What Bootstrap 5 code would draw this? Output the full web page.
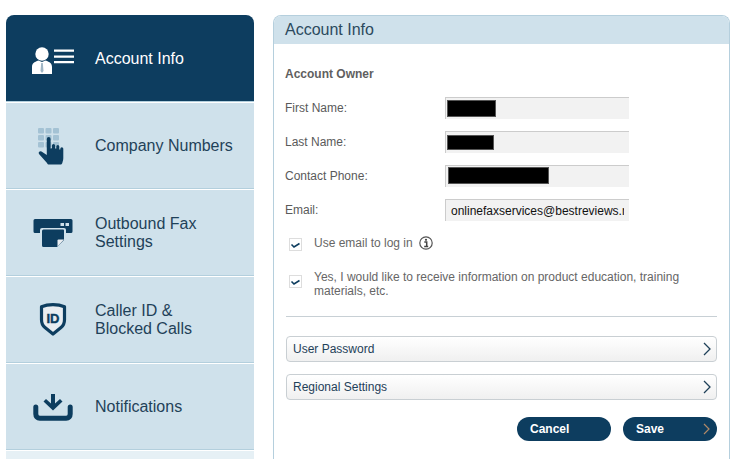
<!DOCTYPE html>
<html lang="en"><head><meta charset="utf-8">
<link href="https://cdn.jsdelivr.net/npm/bootstrap@5.3.0/dist/css/bootstrap.min.css" rel="stylesheet">
<style>
html,body{height:459px;overflow:hidden}
body{background:#fff;font-family:"Liberation Sans",Arial,sans-serif;color:#5a5a5a}
.shell{padding:15px 5px 0 6px;gap:19px;height:459px;overflow:hidden}
.side{width:248px;flex:none}
.side-item{background:#cfe1eb;color:#1f4159;font-size:16px;line-height:18px;border-top:1px solid #fff;border-bottom:1px solid #b3cfdd;box-sizing:content-box;height:85px}
.side-item.on{background:#0d3d5f;color:#fff;border-radius:8px 8px 0 0;border:0;border-bottom:1px solid #b3cfdd;padding-top:1px;box-sizing:border-box;height:87px}
.side-rest{height:20px;background:#e6f0f5;border-top:1px solid #fff}
.ic{width:89px;flex:none;padding-left:5px}
.ic-a{margin-top:4px}
.ic-b{margin-top:3px}
.ic-c{margin-top:2px}
.ic-e{margin-top:2px}
.panel{flex:1;border:1px solid #b5cfdd;border-bottom:0;border-radius:8px 8px 0 0;height:460px}
.panel-head{background:#cfe1eb;color:#2c4a5e;font-size:16px;line-height:27px;height:28px;padding:0 11px;border-radius:7px 7px 0 0}
.panel-body{padding:23px 12px 0}
.owner{font-size:12px;font-weight:700;line-height:14px;margin:0 0 16px -1px;color:#5f5f5f}
.frow{font-size:12px;height:34px}
.flabel{width:159px;flex:none;line-height:22px;margin-left:-1px}
.fbox{width:184px;height:22px;background:#f2f2f2;border-top:1px solid #ccc;border-left:1px solid #ccc;padding-left:1px;margin-left:1px;white-space:nowrap;color:#111;line-height:23px}
.fbox-mail{padding:0 5px}
.clip{display:block;overflow:hidden}
.ink{display:block;background:#000;border:1px solid #555}
.ink-1{width:49px;height:17px}
.ink-2{width:47px;height:15px}
.ink-3{width:101px;height:17px;margin:0 0 2px 1px}
.chk{width:13px;height:13px;border:1px solid #ddd;background:#fff;flex:none;margin-right:12px}
.optline{font-size:12px;line-height:14px;color:#666;margin-left:3px}
.opt-1{height:20px}
.opt-1 .chk{margin-top:3px}
.opt-2{margin-top:17px}
.opt-2 .chk{margin-top:5px}
.info{margin-left:6px;margin-top:-1px}
.hr{border-top:1px solid #c8d0d5;margin:18px 0 19px}
.acc{height:26px;border:1px solid #c9cfd3;border-radius:4px;background:linear-gradient(#fff,#f0f0f0);font-size:12px;color:#1f4159;padding:0 5px 0 6px;margin-bottom:12px}
.acts{margin-top:17px;column-gap:12px}
.pill{width:94px;height:24px;border-radius:12px;background:#0d3d5f;color:#fff;font-size:12px;font-weight:700;padding:0 7px 0 13px}
</style></head><body>
<div class="shell d-flex">
<nav class="side">
<div class="side-item on d-flex align-items-center"><div class="ic ic-a d-flex justify-content-center"><svg width="42" height="28" viewBox="0 0 42 28"><circle cx="10" cy="7" r="6.700" fill="#fff"/><path d="M0 27V20c0-3.500 2-5 6.500-6.500L10 15l3.500-1.500C18 15 20 16.500 20 20v7z" fill="#fff"/><path d="M9.200 16h1.600l.7 8-1.500 2-1.500-2z" fill="#9fb5c4"/><path d="M22 2.500h20v2.300H22zM22 8.500h20v2.300H22zM22 14h20v2.300H22z" fill="#fff"/></svg></div><span>Account Info</span></div>
<div class="side-item d-flex align-items-center"><div class="ic ic-b d-flex justify-content-center"><svg width="30" height="38" viewBox="0 0 30 38"><g fill="#a4c2d4"><rect width="6" height="5.500" rx="1"/><rect x="7.500" width="6" height="5.500" rx="1"/><rect x="15" width="6" height="5.500" rx="1"/><rect y="7" width="6" height="5.500" rx="1"/><rect x="7.500" y="7" width="6" height="5.500" rx="1"/><rect x="15" y="7" width="6" height="5.500" rx="1"/><rect y="14" width="6" height="5.500" rx="1"/><rect x="7.500" y="14" width="6" height="5.500" rx="1"/><rect x="15" y="14" width="6" height="5.500" rx="1"/></g><path fill="#0d3d5f" d="M8.800 11a1.900 1.900 0 0 1 3.800 0v9.500l1.300-.2V17.500a1.600 1.600 0 0 1 3.200 0v3h1.200v-2a1.500 1.500 0 0 1 3 0v3h1v-.8a1.500 1.500 0 0 1 3 0V30c0 2-.6 3.500-1 5-.2.800-.8 1.500-1.800 1.500H11c-1 0-1.500-.5-2-1.500L1 26a1.800 1.800 0 0 1 2.500-2.500l5.300 3.500z"/></svg></div><span>Company Numbers</span></div>
<div class="side-item d-flex align-items-center"><div class="ic ic-c d-flex justify-content-center"><svg width="40" height="29" viewBox="0 0 40 29"><path fill="#0d3d5f" d="M2 0h36a1.500 1.500 0 0 1 1.500 1.500V12.500a1.500 1.500 0 0 1-1.500 1.500H33v-3a2 2 0 0 0-2-2H9a2 2 0 0 0-2 2v3H2A1.500 1.500 0 0 1 .500 12.500V1.500A1.500 1.500 0 0 1 2 0z"/><path fill="#0d3d5f" d="M10.500 10.500h19.500a1 1 0 0 1 1 1V21l-7 7H10.500A1.500 1.500 0 0 1 9 26.500V12a1.500 1.500 0 0 1 1.500-1.500z"/><rect x="27.500" y="4" width="3.500" height="3" fill="#cfe1eb"/><rect x="32.500" y="4" width="3.500" height="3" fill="#cfe1eb"/><path fill="#e9edf1" d="M24.500 27.500v-6a1 1 0 0 1 1-1h5.500z"/></svg></div><span>Outbound Fax<br>Settings</span></div>
<div class="side-item d-flex align-items-center"><div class="ic d-flex justify-content-center"><svg width="28" height="33" viewBox="0 0 28 33"><path fill="#e9edf1" stroke="#0d3d5f" stroke-width="3.200" stroke-linejoin="round" d="M14 1.700c4 0 8 .6 11.500 2v13c0 4-1 5.800-3.500 7.800l-8 6.500-8-6.500c-2.500-2-3.500-3.800-3.500-7.800v-13c3.500-1.400 7.500-2 11.500-2z"/><text x="14" y="20" text-anchor="middle" font-family="Liberation Sans" font-weight="700" font-size="13" stroke="#0d3d5f" stroke-width=".4" fill="#0d3d5f">ID</text></svg></div><span>Caller ID &amp;<br>Blocked Calls</span></div>
<div class="side-item d-flex align-items-center"><div class="ic ic-e d-flex justify-content-center"><svg width="40" height="27" viewBox="0 0 40 27"><path fill="none" stroke="#0d3d5f" stroke-width="5" stroke-linecap="round" stroke-linejoin="round" d="M2.800 13v7c0 2.500 1.500 4.300 4 4.300h26.400c2.500 0 4-1.800 4-4.300v-7"/><path fill="#0d3d5f" d="M18 0h4v9.500l5-4.500 2.500 2.500L20 16.500l-9.500-9L13 5l5 4.500z"/></svg></div><span>Notifications</span></div>
<div class="side-rest"></div>
</nav>
<main class="panel">
<div class="panel-head">Account Info</div>
<div class="panel-body">
<div class="owner">Account Owner</div>
<div class="frow d-flex"><div class="flabel">First Name:</div><div class="fbox d-flex align-items-center"><i class="ink ink-1"></i></div></div>
<div class="frow d-flex"><div class="flabel">Last Name:</div><div class="fbox d-flex align-items-center"><i class="ink ink-2"></i></div></div>
<div class="frow d-flex"><div class="flabel">Contact Phone:</div><div class="fbox d-flex align-items-center"><i class="ink ink-3"></i></div></div>
<div class="frow d-flex"><div class="flabel">Email:</div><div class="fbox fbox-mail"><span class="clip">onlinefaxservices@bestreviews.net</span></div></div>
<div class="d-flex align-items-center optline opt-1"><span class="chk d-flex"><svg width="11" height="11" viewBox="0 0 11 11"><path d="M1.500 5.500 4 8l5.500-3.500" fill="none" stroke="#0d3d5f" stroke-width="1.600"/></svg></span><span>Use email to log in</span><svg class="info" width="14" height="14" viewBox="0 0 14 14"><circle cx="7" cy="7" r="6.200" fill="none" stroke="#555" stroke-width="1.200"/><path d="M5.300 6h2.400v4.200M5.200 10.400h4" fill="none" stroke="#444" stroke-width="1.500"/><circle cx="7" cy="3.800" r="1.100" fill="#444"/></svg></div>
<div class="d-flex optline opt-2"><span class="chk d-flex"><svg width="11" height="11" viewBox="0 0 11 11"><path d="M1.500 5.500 4 8l5.500-3.500" fill="none" stroke="#0d3d5f" stroke-width="1.600"/></svg></span><span>Yes, I would like to receive information on product education, training materials, etc.</span></div>
<div class="hr"></div>
<div class="acc d-flex align-items-center justify-content-between"><span>User Password</span><svg width="8" height="14" viewBox="0 0 8 14"><path d="M1 1l6 6-6 6" fill="none" stroke="#1f4159" stroke-width="1.300"/></svg></div>
<div class="acc d-flex align-items-center justify-content-between"><span>Regional Settings</span><svg width="8" height="14" viewBox="0 0 8 14"><path d="M1 1l6 6-6 6" fill="none" stroke="#1f4159" stroke-width="1.300"/></svg></div>
<div class="d-flex justify-content-end acts">
<div class="pill d-flex align-items-center">Cancel</div>
<div class="pill d-flex align-items-center justify-content-between"><span>Save</span><svg width="7" height="12" viewBox="0 0 7 12"><path d="M1 1l5 5-5 5" fill="none" stroke="#b08a68" stroke-width="1.200"/></svg></div>
</div>
</div>
</main>
</div>
<script src="https://cdn.jsdelivr.net/npm/bootstrap@5.3.0/dist/js/bootstrap.bundle.min.js"></script>
</body></html>
